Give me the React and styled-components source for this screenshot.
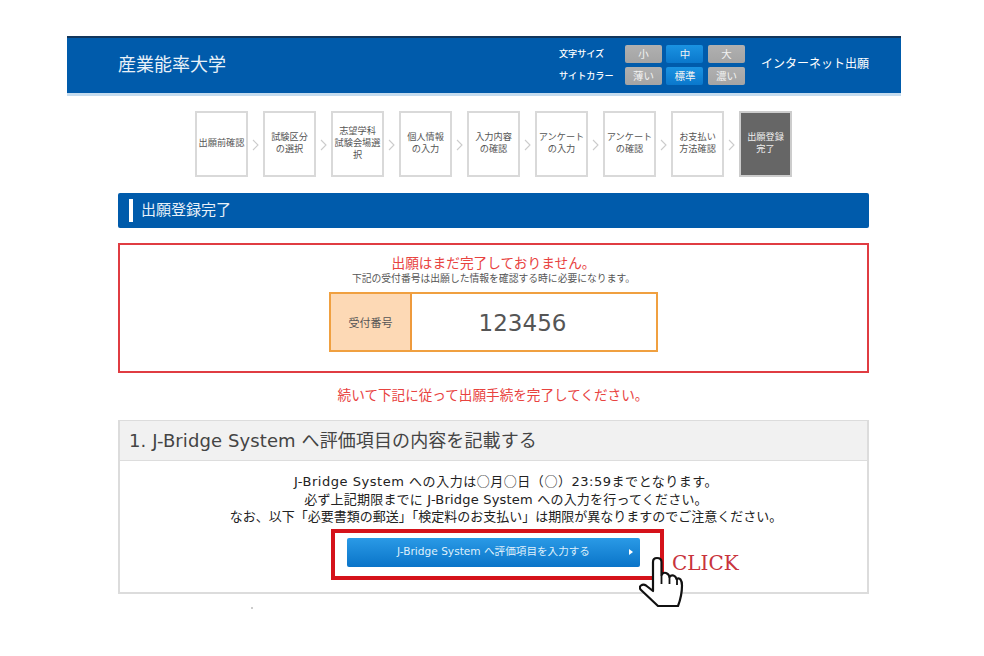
import React from "react";
import styled, { createGlobalStyle } from "styled-components";

const Global = createGlobalStyle`
  html, body { margin: 0; padding: 0; background: #fff; }
  body { font-family: "Noto Sans", "Noto Sans CJK JP", sans-serif; color: #333; }
  * { box-sizing: border-box; }
`;
const Page = styled.div`
  position: relative; width: 984px; height: 656px; padding: 36px 83px 0 67px; overflow: hidden;
`;
const Header = styled.header`
  height: 60px; background: #005bab; border-top: 2px solid #12365c; border-bottom: 3px solid #c5dcef;
  display: flex; align-items: center; padding: 0 32px 0 51px; color: #fff;
`;
const Logo = styled.div`
  font-family: "Noto Sans CJK JP", sans-serif; font-size: 18px; flex: 1; margin-top: -5px; color: #e8f1f8;
`;
const Settings = styled.div`
  display: grid; grid-template-columns: 61.5px 37px 37px 37px; row-gap: 4px; column-gap: 4.5px; align-items: center; margin-right: 16px; margin-top: -2px;
`;
const SetLabel = styled.div`
  font-size: 9.1px; font-weight: 500; line-height: 18px; white-space: nowrap; color: #fff;
`;
const SetBtn = styled.div`
  width: 37px; height: 18px; display: flex; align-items: center; justify-content: center; border-radius: 2px;
  font-size: 10.5px; color: #f2f2f2;
  background: ${p => p.$on ? "linear-gradient(#1a93e2,#0a78cc)" : "linear-gradient(#b0b0b0,#a4a4a4)"};
`;
const Entry = styled.div`
  font-size: 12px; color: #fff; white-space: nowrap; margin-top: -6px;
`;
const Steps = styled.nav`
  display: flex; margin: 15px 0 0 128px; height: 66px;
`;
const Step = styled.div`
  width: 53px; height: 66px; border: 2px solid ${p => p.$now ? "#ccc" : "#d9d9d9"}; background: ${p => p.$now ? "#666" : "#fff"};
  color: ${p => p.$now ? "#eee" : "#555"}; font-size: 9.2px; line-height: 12px; text-align: center; padding-bottom: 2px;
  display: flex; align-items: center; justify-content: center; white-space: pre-line; flex: none;
`;
const Chevron = styled.div`
  width: 15px; flex: none; display: flex; align-items: center; justify-content: center; padding-top: 1px;
`;
const Content = styled.main`
  margin: 16px 32px 0 51px;
`;
const Title = styled.h1`
  margin: 0; height: 35px; background: #005bab; border-radius: 2px; display: flex; align-items: center; padding-left: 11px;
  font-weight: 400; font-size: 15px; color: #e8f1f8; line-height: 20px;
  &::before { content: ""; width: 4px; height: 23px; background: #fff; margin-right: 8px; }
  & > span { margin-top: -4px; }
`;
const Notice = styled.section`
  margin-top: 15px; height: 130px; border: 2px solid #e03c42; display: flex; flex-direction: column; align-items: center; padding-top: 9px;
`;
const Alert = styled.div`
  font-size: 13.7px; line-height: 18px; color: #e8433f;
`;
const Sub = styled.div`
  font-size: 9.8px; line-height: 13px; color: #555;
`;
const Receipt = styled.div`
  display: flex; width: 329px; height: 60px; margin-top: 7px; border: 2px solid #f0a040;
`;
const ReceiptLabel = styled.div`
  width: 81px; background: #fdd9b5; border-right: 2px solid #ee9a3c; display: flex; align-items: center; justify-content: center; font-size: 11px; color: #555;
`;
const ReceiptValue = styled.div`
  flex: 1; display: flex; align-items: center; justify-content: center; font-size: 23px; color: #555; padding: 2px 23px 0 0;
  font-family: "DejaVu Sans", sans-serif;
`;
const Continue = styled.div`
  margin-top: 13px; text-align: center; font-size: 13.6px; line-height: 18px; color: #e8433f; padding-right: 1px;
`;
const Card = styled.section`
  margin-top: 16px; height: 174px; border: 2px solid #dcdcdc; border-width: 1px 2px 2px;
  font-family: "DejaVu Sans", "Noto Sans CJK JP", sans-serif;
`;
const CardHead = styled.h2`
  margin: 0; height: 40px; background: #f1f1f1; border-bottom: 1px solid #ddd; display: flex; align-items: center; padding: 0 0 4px 9px;
  font-weight: 400; font-size: 18px; letter-spacing: 0.1px; color: #444;
`;
const CardBody = styled.div`
  padding: 11px 0 0 25px; display: flex; flex-direction: column; align-items: center;
`;
const Line = styled.p`
  margin: 0; font-size: 13px; line-height: 17.5px; color: #222; white-space: nowrap; text-align: center;
  letter-spacing: ${p => p.$spacing || 0}px;
`;
const Ring = styled.span`
  font-family: "Noto Sans CJK JP", sans-serif;
`;
const Action = styled.a`
  margin: 12px 0 0 -25px; width: 293px; height: 29px; border-radius: 2px; background: linear-gradient(#2a9ae6,#0a74c8);
  color: #dff0fb; font-size: 10.6px; display: flex; align-items: center; justify-content: center; position: relative; padding-bottom: 3px;
  &::after { content: ""; position: absolute; right: 7px; top: 11px; border-left: 4px solid #fff; border-top: 3px solid transparent; border-bottom: 3px solid transparent; }
`;
const Highlight = styled.div`
  position: absolute; left: 331px; top: 529px; width: 333px; height: 51px; border: 4px solid #d5121a; pointer-events: none;
`;
const ClickLabel = styled.div`
  position: absolute; left: 672px; top: 551px; font-family: "DejaVu Serif", serif; font-size: 20px; line-height: 24px; color: #c8333c;
`;
const Hand = styled.svg`
  position: absolute; left: 639px; top: 556px;
`;
const Dot = styled.div`
  position: absolute; left: 251px; top: 607px; width: 2px; height: 2px; background: #ccc;
`;

const steps = ["出願前確認","試験区分\nの選択","志望学科\n試験会場選\n択","個人情報\nの入力","入力内容\nの確認","アンケート\nの入力","アンケート\nの確認","お支払い\n方法確認","出願登録\n完了"];

export default function App() {
  return (
    <Page>
      <Global />
      <Header>
        <Logo>産業能率大学</Logo>
        <Settings>
          <SetLabel>文字サイズ</SetLabel>
          <SetBtn>小</SetBtn><SetBtn $on>中</SetBtn><SetBtn>大</SetBtn>
          <SetLabel>サイトカラー</SetLabel>
          <SetBtn>薄い</SetBtn><SetBtn $on>標準</SetBtn><SetBtn>濃い</SetBtn>
        </Settings>
        <Entry>インターネット出願</Entry>
      </Header>
      <Steps>
        {steps.map((s, i) => (
          <React.Fragment key={s}>
            <Step $now={i === steps.length - 1}>{s}</Step>
            {i < steps.length - 1 && (
              <Chevron>
                <svg width="7" height="12" viewBox="0 0 7 12"><path d="M1 1l5 5-5 5" fill="none" stroke="#ccc" strokeWidth="1.1" /></svg>
              </Chevron>
            )}
          </React.Fragment>
        ))}
      </Steps>
      <Content>
        <Title><span>出願登録完了</span></Title>
        <Notice>
          <Alert>出願はまだ完了しておりません。</Alert>
          <Sub>下記の受付番号は出願した情報を確認する時に必要になります。</Sub>
          <Receipt>
            <ReceiptLabel>受付番号</ReceiptLabel>
            <ReceiptValue>123456</ReceiptValue>
          </Receipt>
        </Notice>
        <Continue>続いて下記に従って出願手続を完了してください。</Continue>
        <Card>
          <CardHead>1. J-Bridge System へ評価項目の内容を記載する</CardHead>
          <CardBody>
            <Line $spacing={0.53}>J-Bridge System への入力は<Ring>○</Ring>月<Ring>○</Ring>日（<Ring>○</Ring>）23:59までとなります。</Line>
            <Line $spacing={0.2}>必ず上記期限までに J-Bridge System への入力を行ってください。</Line>
            <Line>なお、以下「必要書類の郵送」「検定料のお支払い」は期限が異なりますのでご注意ください。</Line>
            <Action>J-Bridge System へ評価項目を入力する</Action>
          </CardBody>
        </Card>
      </Content>
      <Highlight />
      <ClickLabel>CLICK</ClickLabel>
      <Hand width="46" height="56" viewBox="0 0 46 56">
        <path d="M14 35V6C14 3.500 15.500 2 18 2s4.500 1.500 4.500 4V19c1-2 3-2.500 4.500-2s3 1.500 3.500 4c1-1.500 2.500-2 4-1.500s2.500 1.500 3 3.500c1.500-1 3-.8 4 .5s1.500 3 1.500 6c0 8-1.500 14-4 20.500H19L1.500 33.500c-1-1.500-.8-3 .5-4s3.500-1 5 0z" fill="#fff" stroke="#111" strokeWidth="2.2" strokeLinejoin="round" />
        <path d="M22.500 19v9M30.500 21v7M38 23v6" fill="none" stroke="#111" strokeWidth="1.800" />
      </Hand>
      <Dot />
    </Page>
  );
}
